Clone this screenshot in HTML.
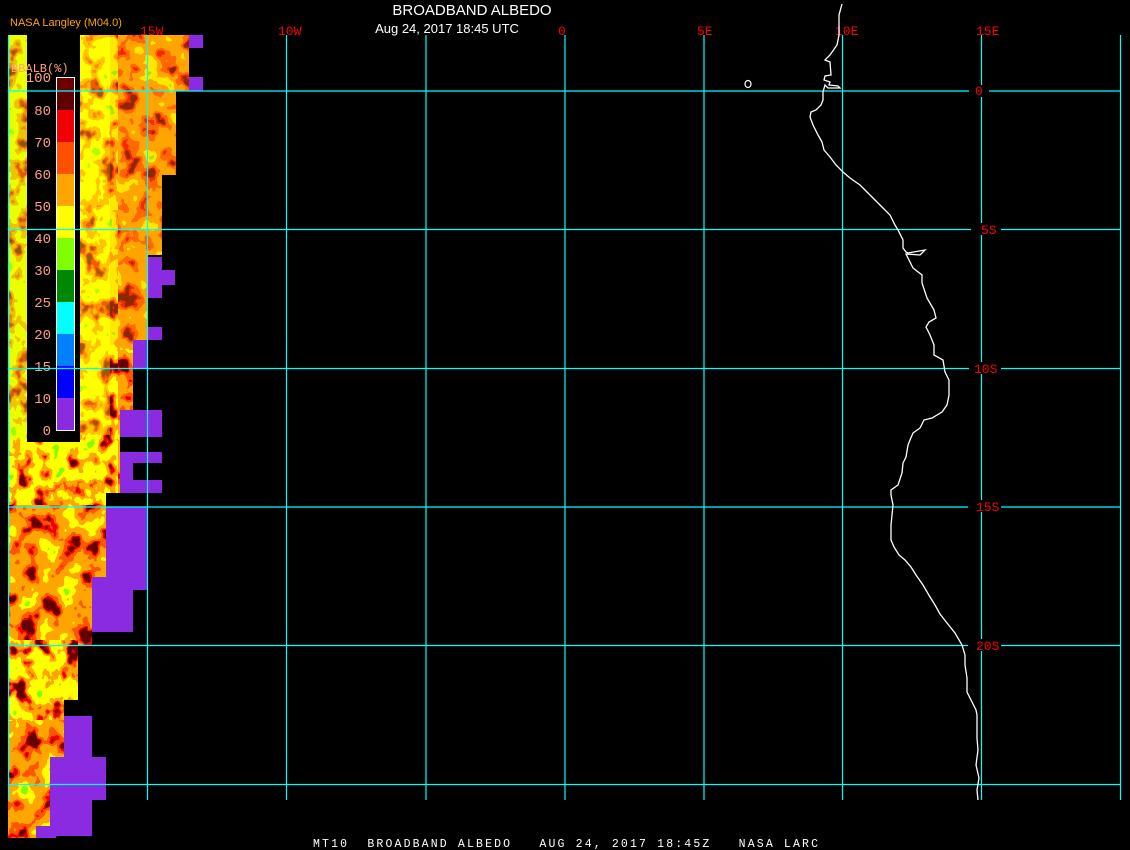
<!DOCTYPE html>
<html><head><meta charset="utf-8"><style>
html,body{margin:0;padding:0;background:#000;width:1130px;height:850px;overflow:hidden}
svg{display:block}
.m{font-family:"Liberation Mono",monospace}
.s{font-family:"Liberation Sans",sans-serif}
</style></head><body>
<svg width="1130" height="850" viewBox="0 0 1130 850" xmlns="http://www.w3.org/2000/svg">
<defs>
<filter id="fy" x="0" y="0" width="100%" height="100%" color-interpolation-filters="sRGB">
<feTurbulence type="fractalNoise" baseFrequency="0.06 0.05" numOctaves="3" seed="3"/>
<feColorMatrix type="matrix" values="1 0 0 0 0 1 0 0 0 0 1 0 0 0 0 0 0 0 0 1"/>
<feComponentTransfer>
<feFuncR type="discrete" tableValues="0.4 0.4 0.4 0.4 0.4 0.4 0.94 1 1 1 1 1 1 1 1 0.5 0.5 0.5 0.5 0.5"/>
<feFuncG type="discrete" tableValues="0 0 0 0 0 0 0 0.33 0.65 0.65 1 1 1 1 1 1 1 1 1 1"/>
<feFuncB type="discrete" tableValues="0"/>
<feFuncA type="discrete" tableValues="1"/>
</feComponentTransfer>
</filter>
<filter id="fo" x="0" y="0" width="100%" height="100%" color-interpolation-filters="sRGB">
<feTurbulence type="fractalNoise" baseFrequency="0.05 0.045" numOctaves="3" seed="7"/>
<feColorMatrix type="matrix" values="1 0 0 0 0 1 0 0 0 0 1 0 0 0 0 0 0 0 0 1"/>
<feComponentTransfer>
<feFuncR type="discrete" tableValues="0.4 0.4 0.4 0.4 0.4 0.4 0.94 1 1 1 1 1 1 1 1 1 0.5 0.5 0.5 0.5"/>
<feFuncG type="discrete" tableValues="0 0 0 0 0 0 0 0.33 0.33 0.65 0.65 0.65 0.65 1 1 1 1 1 1 1"/>
<feFuncB type="discrete" tableValues="0"/>
<feFuncA type="discrete" tableValues="1"/>
</feComponentTransfer>
</filter>
<clipPath id="cf"><path d="M8 35H189V91H176V175H162V255H148V340H133V410H120V493H106V577H92V646H78V700H64V770H50V830H36V838H8Z"/></clipPath>
</defs>
<g clip-path="url(#cf)">
<rect x="8" y="35" width="200" height="805" filter="url(#fo)"/>
<rect x="8" y="35" width="110" height="470" filter="url(#fy)"/>
<rect x="8" y="640" width="70" height="80" filter="url(#fy)"/>
<rect x="80" y="35" width="30" height="400" fill="#ffff00" opacity="0.35"/>
<rect x="110" y="35" width="80" height="310" fill="#ffa500" opacity="0.25"/>
<rect x="8" y="35" width="19" height="405" fill="#c8ff00" opacity="0.35"/>
</g>
<g fill="#8a2be2">
<rect x="189" y="35" width="14" height="13"/><rect x="189" y="77" width="14" height="14"/>
<rect x="148" y="257" width="14" height="41"/><rect x="162" y="270" width="13" height="15"/>
<rect x="148" y="327" width="14" height="13"/><rect x="133" y="340" width="15" height="28"/>
<rect x="120" y="410" width="42" height="27"/><rect x="120" y="452" width="42" height="11"/>
<rect x="120" y="463" width="13" height="17"/><rect x="120" y="480" width="42" height="13"/>
<rect x="106" y="507" width="41" height="83"/><rect x="92" y="577" width="41" height="55"/>
<rect x="64" y="716" width="28" height="41"/><rect x="50" y="757" width="56" height="43"/>
<rect x="50" y="800" width="42" height="36"/><rect x="36" y="826" width="20" height="12"/>
</g>
<rect x="27" y="35" width="53" height="407" fill="#000"/>
<g stroke="none">
<rect x="56" y="77" width="19" height="16" fill="#6a0000"/>
<rect x="56" y="93" width="19" height="17" fill="#600000"/>
<rect x="56" y="110" width="19" height="32" fill="#f00000"/>
<rect x="56" y="142" width="19" height="32" fill="#ff5000"/>
<rect x="56" y="174" width="19" height="32" fill="#ffa500"/>
<rect x="56" y="206" width="19" height="32" fill="#ffff00"/>
<rect x="56" y="238" width="19" height="32" fill="#80ff00"/>
<rect x="56" y="270" width="19" height="32" fill="#008800"/>
<rect x="56" y="302" width="19" height="32" fill="#00ffff"/>
<rect x="56" y="334" width="19" height="32" fill="#0080ff"/>
<rect x="56" y="366" width="19" height="32" fill="#0000ff"/>
<rect x="56" y="398" width="19" height="32" fill="#8a2be2"/>
</g>
<rect x="56.5" y="77.5" width="18" height="353" fill="none" stroke="#fff" stroke-width="1"/>
<g class="m" font-size="14" fill="#ffa080" text-anchor="end">
<text x="51" y="82">100</text><text x="51" y="115">80</text><text x="51" y="147">70</text>
<text x="51" y="179">60</text><text x="51" y="211">50</text><text x="51" y="243">40</text>
<text x="51" y="275">30</text><text x="51" y="307">25</text><text x="51" y="339">20</text>
<text x="51" y="371">15</text><text x="51" y="403">10</text><text x="51" y="435">0</text>
</g>
<text class="m" x="11" y="72" font-size="12" fill="#ffa080">BBALB(%)</text>
<g stroke="#00ffff" stroke-width="1.2">
<line x1="8.5" y1="35" x2="8.5" y2="800"/><line x1="147.5" y1="35" x2="147.5" y2="800"/>
<line x1="286.5" y1="35" x2="286.5" y2="800"/><line x1="426" y1="35" x2="426" y2="800"/>
<line x1="565" y1="35" x2="565" y2="800"/><line x1="704" y1="35" x2="704" y2="800"/>
<line x1="842.5" y1="35" x2="842.5" y2="800"/><line x1="981.5" y1="35" x2="981.5" y2="800"/>
<line x1="1120.5" y1="35" x2="1120.5" y2="800"/>
<line x1="8" y1="91" x2="1120" y2="91"/><line x1="8" y1="229.5" x2="1120" y2="229.5"/>
<line x1="8" y1="368.5" x2="1120" y2="368.5"/><line x1="8" y1="507" x2="1120" y2="507"/>
<line x1="8" y1="645.5" x2="1120" y2="645.5"/><line x1="8" y1="784.5" x2="1120" y2="784.5"/>
</g>
<g fill="#000">
<rect x="969" y="85" width="20" height="12"/><rect x="971" y="223" width="30" height="12"/>
<rect x="969" y="362" width="32" height="12"/><rect x="968" y="500" width="33" height="12"/>
<rect x="968" y="639" width="33" height="12"/>
</g>
<g class="m" font-size="13" fill="#ff0000">
<text x="140" y="35">15W</text><text x="278" y="35">10W</text><text x="558" y="35">0</text>
<text x="697" y="35">5E</text><text x="835" y="35">10E</text><text x="976" y="35">15E</text>
<text x="975" y="95">0</text><text x="981" y="234">5S</text><text x="974" y="373">10S</text>
<text x="976" y="511">15S</text><text x="976" y="650">20S</text>
</g>
<polyline fill="none" stroke="#fff" stroke-width="1.3" points="842,4 839,15 839,35 837,45 830,55 825,60 830,62 831,75 825,76 824,80 830,82 829,85 838,86 840,88 828,88 825,85 823,92 823,100 821,105 816,110 811,112 810,117 813,125 818,135 822,142 824,150 830,157 836,165 843,172 850,178 860,185 870,195 880,205 890,215 895,225 898,230 903,240 903,248 906,252 908,253 925,250 920,255 906,254 913,268 922,275 922,283 927,298 934,310 936,318 929,322 926,327 930,335 934,345 934,355 943,360 945,372 949,380 949,395 947,405 942,412 932,418 924,420 920,428 913,433 910,440 908,445 906,457 903,463 902,473 898,485 891,490 891,495 893,505 891,525 891,540 894,547 899,555 905,560 911,567 916,575 923,585 930,597 935,605 940,614 947,623 955,633 962,645 965,655 965,665 967,678 967,692 971,700 976,710 977,715 977,725 977,738 978,750 976,765 979,778 977,790 978,800"/>
<ellipse cx="748" cy="84" rx="3" ry="3.5" fill="none" stroke="#fff" stroke-width="1.2"/>
<text class="s" x="472" y="15" font-size="15" fill="#fff" text-anchor="middle">BROADBAND ALBEDO</text>
<text class="s" x="447" y="33" font-size="13" fill="#fff" text-anchor="middle">Aug 24, 2017 18:45 UTC</text>
<text class="s" x="10" y="26" font-size="11" fill="#ffa500">NASA Langley (M04.0)</text>
<text class="m" x="313" y="847" font-size="11.5" fill="#fff" xml:space="preserve" textLength="505">MT10  BROADBAND ALBEDO   AUG 24, 2017 18:45Z   NASA LARC</text>
</svg>
</body></html>
